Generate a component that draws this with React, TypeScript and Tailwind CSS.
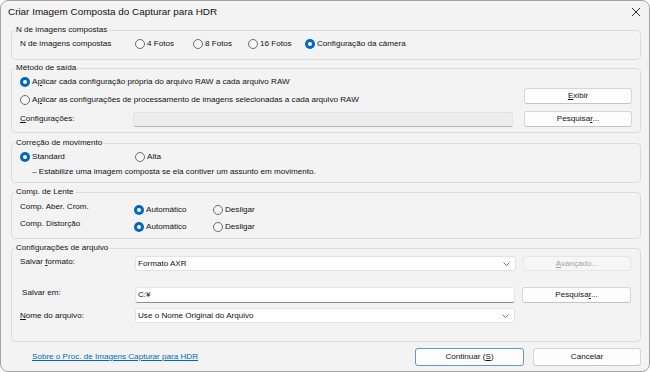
import React from "react";

function Radio({ checked, label, className = "" }: { checked?: boolean; label: React.ReactNode; className?: string }) {
  return (
    <div className={`flex items-center h-[14px] shrink-0 ${className}`}>
      {checked ? (
        <span className="w-[10px] h-[10px] rounded-full bg-[#0067c0] flex items-center justify-center shrink-0">
          <span className="w-[4px] h-[4px] rounded-full bg-white" />
        </span>
      ) : (
        <span className="w-[10px] h-[10px] rounded-full border border-[#6b6b6b] bg-[#f7f7f7] shrink-0" />
      )}
      <span className="ml-[2px] whitespace-nowrap">{label}</span>
    </div>
  );
}

function Group({ title, className = "", children }: { title: string; className?: string; children?: React.ReactNode }) {
  return (
    <div className={`relative w-[630px] border border-[#dcdcdc] rounded-[4px] shrink-0 ${className}`}>
      <span className="absolute left-[3px] top-[-8px] px-[1px] bg-[#f3f3f3] leading-[14px] whitespace-nowrap">{title}</span>
      {children}
    </div>
  );
}

function Button({ children, className = "", disabled }: { children: React.ReactNode; className?: string; disabled?: boolean }) {
  return (
    <div
      className={`flex items-center justify-center rounded-[3px] border shrink-0 ${
        disabled ? "bg-[#f6f6f6] border-[#e6e6e6] text-[#a3a3a3]" : "bg-[#fdfdfd] border-[#d6d6d6] border-b-[#c4c4c4]"
      } ${className}`}
    >
      {children}
    </div>
  );
}

function Chevron() {
  return (
    <svg width="7" height="4" viewBox="0 0 7 4" className="shrink-0">
      <polyline points="0.5,0.5 3.5,3.5 6.5,0.5" fill="none" stroke="#666" strokeWidth="0.9" />
    </svg>
  );
}

function Select({ value, className = "" }: { value: string; className?: string }) {
  return (
    <div className={`flex items-center justify-between bg-white border border-[#e2e2e2] rounded-[3px] pl-[2px] pr-[5px] shrink-0 ${className}`}>
      <span className="whitespace-nowrap">{value}</span>
      <Chevron />
    </div>
  );
}

export default function App() {
  return (
    <div className="w-[650px] h-[372px] bg-white">
      <div className="w-[650px] h-[372px] bg-[#f3f3f3] border border-[#a3a3a3] rounded-[8px] overflow-hidden flex flex-col text-[#111111] text-[8.1px] leading-[14px] font-['Liberation_Sans',Arial,sans-serif]">
        {/* Title bar */}
        <div className="h-[22px] flex items-center justify-between pl-[7px] pr-[8px] shrink-0">
          <span className="text-[9.9px] whitespace-nowrap">Criar Imagem Composta do Capturar para HDR</span>
          <svg width="10" height="10" viewBox="0 0 10 10">
            <line x1="1" y1="1" x2="9" y2="9" stroke="#2a2a2a" strokeWidth="1" />
            <line x1="9" y1="1" x2="1" y2="9" stroke="#2a2a2a" strokeWidth="1" />
          </svg>
        </div>

        <div className="flex flex-col pl-[10px]">
          {/* Group 1 */}
          <Group title="N de imagens compostas" className="mt-[7px] h-[30px]">
            <div className="pt-[6px] pl-[8px] flex items-center h-[20px]">
              <span className="w-[115px] shrink-0 whitespace-nowrap">N de imagens compostas</span>
              <Radio label="4 Fotos" className="w-[58px]" />
              <Radio label="8 Fotos" className="w-[55px]" />
              <Radio label="16 Fotos" className="w-[57px]" />
              <Radio checked label="Configuração da câmera" />
            </div>
          </Group>

          {/* Group 2 */}
          <Group title="Método de saída" className="mt-[8px] h-[65px]">
            <div className="pt-[6px] pl-[8px] pr-[8px] flex flex-col">
              <Radio
                checked
                label={
                  <>
                    A<span className="underline">p</span>licar cada configuração própria do arquivo RAW a cada arquivo RAW
                  </>
                }
              />
              <div className="flex justify-between items-end h-[19px] -mt-[1px]">
                <Radio
                  label={
                    <>
                      A<span className="underline">p</span>licar as configurações de processamento de imagens selecionadas a cada arquivo RAW
                    </>
                  }
                />
                <Button className="w-[108px] h-[16px] self-start">
                  <span>
                    <span className="underline">E</span>xibir
                  </span>
                </Button>
              </div>
              <div className="flex items-center h-[16px] mt-[4px]">
                <span className="w-[113px] shrink-0 whitespace-nowrap">
                  <span className="underline">C</span>onfigurações:
                </span>
                <div className="w-[380px] h-[15px] bg-[#ededed] border border-[#e3e3e3] border-b-[#b5b5b5] rounded-[3px] shrink-0" />
                <Button className="w-[108px] h-[16px] ml-auto">
                  <span>
                    Pesquisa<span className="underline">r</span>...
                  </span>
                </Button>
              </div>
            </div>
          </Group>

          {/* Group 3 */}
          <Group title="Correção de movimento" className="mt-[10px] h-[40px]">
            <div className="pt-[6px] pl-[8px] flex flex-col">
              <div className="flex items-center h-[14px]">
                <Radio checked label="Standard" className="w-[115px]" />
                <Radio label="Alta" />
              </div>
              <div className="h-[14px] mt-[1px] pl-[12px] whitespace-nowrap">
                – Estabilize uma imagem composta se ela contiver um assunto em movimento.
              </div>
            </div>
          </Group>

          {/* Group 4 */}
          <Group title="Comp. de Lente" className="mt-[9px] h-[47px]">
            <div className="pt-[7px] pl-[8px] flex flex-col">
              <div className="flex h-[17px]">
                <span className="w-[114px] shrink-0 self-start whitespace-nowrap">Comp. Aber. Crom.</span>
                <div className="flex self-end">
                  <Radio checked label="Automático" className="w-[79px]" />
                  <Radio label="Desligar" />
                </div>
              </div>
              <div className="flex h-[17px]">
                <span className="w-[114px] shrink-0 self-start whitespace-nowrap">Comp. Distorção</span>
                <div className="flex self-end">
                  <Radio checked label="Automático" className="w-[79px]" />
                  <Radio label="Desligar" />
                </div>
              </div>
            </div>
          </Group>

          {/* Group 5 */}
          <Group title="Configurações de arquivo" className="mt-[9px] h-[94px]">
            <div className="pt-[7px] pl-[8px] flex flex-col">
              <div className="flex items-center h-[15px]">
                <span className="w-[115px] shrink-0 self-start -mt-[1px] whitespace-nowrap">
                  Salvar <span className="underline">f</span>ormato:
                </span>
                <Select value="Formato AXR" className="w-[381px] h-[15px]" />
                <Button disabled className="w-[108px] h-[15px] ml-[7px]">
                  <span>
                    <span className="underline">A</span>vançado...
                  </span>
                </Button>
              </div>
              <div className="flex items-center h-[16px] mt-[16px]">
                <span className="w-[115px] shrink-0 pl-[2px] self-start -mt-[1px] whitespace-nowrap">Salvar em:</span>
                <div className="w-[380px] h-[16px] bg-white border border-[#e5e5e5] border-b-[#8c8c8c] rounded-[3px] pl-[2px] flex items-center shrink-0">
                  C:¥
                </div>
                <Button className="w-[109px] h-[16px] ml-[7px]">
                  <span>
                    Pesquisa<span className="underline">r</span>...
                  </span>
                </Button>
              </div>
              <div className="flex items-center h-[15px] mt-[5px]">
                <span className="w-[115px] shrink-0 whitespace-nowrap">
                  <span className="underline">N</span>ome do arquivo:
                </span>
                <Select value="Use o Nome Original do Arquivo" className="w-[380px] h-[15px]" />
              </div>
            </div>
          </Group>

          {/* Bottom row */}
          <div className="w-[630px] flex items-center justify-between mt-[6px] h-[18px]">
            <span className="ml-[21px] text-[#0067c0] underline whitespace-nowrap">Sobre o Proc. de Imagens Capturar para HDR</span>
            <div className="flex items-center">
              <Button className="w-[109px] h-[18px] !border-[#5a98d8]">
                <span>
                  Continuar (<span className="underline">S</span>)
                </span>
              </Button>
              <Button className="w-[108px] h-[18px] ml-[9px]">
                <span>Cancelar</span>
              </Button>
            </div>
          </div>
        </div>
      </div>
    </div>
  );
}
